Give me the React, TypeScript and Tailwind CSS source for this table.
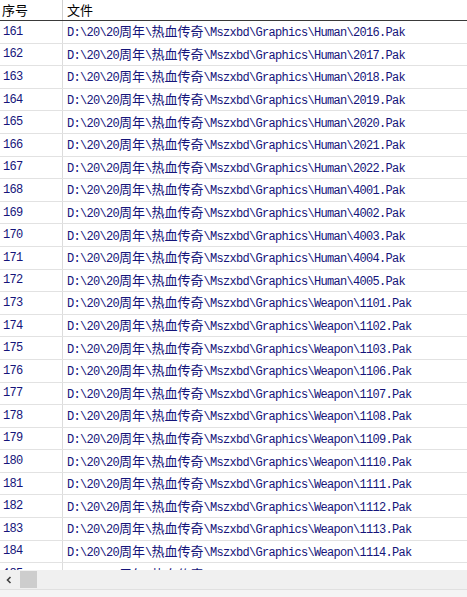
import React from "react";

const rows: { n: number; p: string }[] = [];
const human = ["2016", "2017", "2018", "2019", "2020", "2021", "2022", "4001", "4002", "4003", "4004", "4005"];
const weapon = ["1101", "1102", "1103", "1106", "1107", "1108", "1109", "1110", "1111", "1112", "1113", "1114", "1115"];
let n = 161;
for (const h of human) rows.push({ n: n++, p: `D:\\20\\20周年\\热血传奇\\Mszxbd\\Graphics\\Human\\${h}.Pak` });
for (const w of weapon) rows.push({ n: n++, p: `D:\\20\\20周年\\热血传奇\\Mszxbd\\Graphics\\Weapon\\${w}.Pak` });

function PathText({ text }: { text: string }) {
  const parts = text.split(/([\u4e00-\u9fff]+)/);
  return (
    <span>
      {parts.map((s, i) =>
        /[\u4e00-\u9fff]/.test(s) ? (
          <span
            key={i}
            className="text-[13px] tracking-[0px]"
            style={{ fontFamily: '"Noto Sans CJK SC", sans-serif' }}
          >
            {s}
          </span>
        ) : (
          <span key={i}>{s}</span>
        )
      )}
    </span>
  );
}

export default function App() {
  return (
    <div className="w-[467px] h-[597px] bg-white flex flex-col overflow-hidden">
      <div className="h-[21px] flex border-b border-[#3a3a3a] bg-white shrink-0">
        <div
          className="w-[63px] border-r border-[#d0d0d0] pl-[2px] flex items-center text-[13px] text-black"
          style={{ fontFamily: '"Noto Sans CJK SC", sans-serif' }}
        >
          序号
        </div>
        <div
          className="flex-1 pl-[4px] flex items-center text-[13px] text-black"
          style={{ fontFamily: '"Noto Sans CJK SC", sans-serif' }}
        >
          文件
        </div>
      </div>
      <div className="h-[549px] overflow-hidden shrink-0">
        {rows.map((r) => (
          <div
            key={r.n}
            className="h-[22.6px] flex border-b border-[#e2e2e2] text-[#14147a] text-[12px] tracking-[-0.7px] whitespace-nowrap"
            style={{ fontFamily: '"Liberation Mono", "Noto Sans CJK SC", monospace' }}
          >
            <div className="w-[63px] border-r border-[#dcdcdc] pl-[3px] flex items-center">{r.n}</div>
            <div className="flex-1 pl-[4px] flex items-center">
              <PathText text={r.p} />
            </div>
          </div>
        ))}
      </div>
      <div className="h-[19px] bg-[#f0f0f0] flex items-center shrink-0">
        <div className="w-[18px] h-full flex items-center justify-center">
          <svg width="8" height="8" viewBox="0 0 8 8">
            <path d="M5.5 1 L2.5 4 L5.5 7" stroke="#404040" strokeWidth="1.6" fill="none" />
          </svg>
        </div>
        <div className="ml-[2px] w-[17px] h-[17px] bg-[#cdcdcd]" />
        <div className="flex-1" />
      </div>
      <div className="flex-1 bg-[#f4f4f4] border-t border-[#e0e0e0]" />
    </div>
  );
}
